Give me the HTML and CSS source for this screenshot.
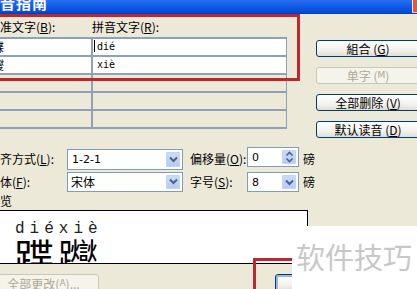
FILE: index.html
```html
<!DOCTYPE html>
<html lang="zh-CN">
<head>
<meta charset="utf-8">
<title>拼音指南</title>
<link rel="stylesheet" href="styles.css">
</head>
<body>
<div class="window">
  <div class="titlebar">
    <span class="title">拼音指南</span>
    <span class="close"></span>
  </div>
  <div class="body">
    <div class="left">
      <div class="heads">
        <span>标准文字(<u>B</u>):</span>
        <span>拼音文字(<u>R</u>):</span>
      </div>
      <div class="grid">
        <div class="cell white cjk">蹀</div>
        <div class="cell white mono"><span class="caret"></span>dié</div>
        <div class="cell white cjk">躞</div>
        <div class="cell white mono">xiè</div>
        <div class="cell"></div><div class="cell"></div>
        <div class="cell"></div><div class="cell"></div>
        <div class="cell"></div><div class="cell"></div>
      </div>
      <div class="form">
        <span class="lbl">对齐方式(<u>L</u>):</span>
        <div class="combo tall"><span class="val">1-2-1</span><span class="drop"><svg width="9" height="7" viewBox="0 0 9 7"><path d="M1 1.5 L4.5 5 L8 1.5" fill="none" stroke="#4d6185" stroke-width="2"/></svg></span></div>
        <span class="lbl lbl2">偏移量(<u>O</u>):</span>
        <div class="combo spin spin-top"><span class="val">0</span><span class="drop"><svg width="9" height="14" viewBox="0 0 9 14"><path d="M1.5 5.5 L4.5 2.5 L7.5 5.5 M1.5 8.5 L4.5 11.5 L7.5 8.5" fill="none" stroke="#4d6185" stroke-width="1.6"/></svg></span></div>
        <span class="unit">磅</span>

        <span class="lbl">字体(<u>F</u>):</span>
        <div class="combo"><span class="val cjkval">宋体</span><span class="drop"><svg width="9" height="7" viewBox="0 0 9 7"><path d="M1 1.5 L4.5 5 L8 1.5" fill="none" stroke="#4d6185" stroke-width="2"/></svg></span></div>
        <span class="lbl lbl2">字号(<u>S</u>):</span>
        <div class="combo spin"><span class="val">8</span><span class="drop"><svg width="9" height="7" viewBox="0 0 9 7"><path d="M1 1.5 L4.5 5 L8 1.5" fill="none" stroke="#4d6185" stroke-width="2"/></svg></span></div>
        <span class="unit">磅</span>
      </div>
      <div class="plabel">预览</div>
      <div class="preview">
        <div class="py">diéxiè</div>
        <div class="hz">蹀躞</div>
      </div>
      <div class="bottom">
        <span class="btn disabled wide">全部更改(<span class="sm">A</span>)...</span>
        <span class="btn default ok">确定</span>
      </div>
    </div>
    <div class="right">
      <span class="btn">組合 (<u>G</u>)</span>
      <span class="btn disabled">单字 (<span class="sm">M</span>)</span>
      <span class="btn">全部删除 (<u>V</u>)</span>
      <span class="btn">默认读音 (<u>D</u>)</span>
    </div>
  </div>
  <div class="mark mark-top"></div>
  <div class="mark mark-bottom"></div>
  <div class="watermark">软件技巧</div>
</div>
</body>
</html>
```

FILE: styles.css
```css
* { box-sizing: border-box; }
html, body { margin: 0; padding: 0; }
body { background: #ece9d8; }
.window {
  position: relative;
  width: 417px;
  height: 289px;
  overflow: hidden;
  background: #ece9d8;
  font-family: "Noto Sans CJK SC", "DejaVu Sans", sans-serif;
  font-size: 12px;
  color: #000;
}
u { text-decoration: underline; text-underline-offset: 1px; }
.titlebar {
  height: 14px;
  background: linear-gradient(#2a6ef0, #0a58e6 60%, #0548d2);
  border-bottom: 1px solid #0a3cb8;
  display: flex;
  justify-content: space-between;
  overflow: hidden;
}
.title {
  color: #fff;
  font-weight: bold;
  font-size: 15px;
  line-height: 15px;
  letter-spacing: 1px;
  margin-left: -16px;
  margin-top: -5px;
}
.close {
  width: 5px;
  height: 13px;
  background: #e2583a;
  border-left: 1px solid #f7e6e0;
  border-bottom: 1px solid #f0c0b0;
}
.body {
  display: grid;
  grid-template-columns: 328px 104px;
  margin-left: -12px;
}
.left { display: flex; flex-direction: column; }
.heads {
  display: grid;
  grid-template-columns: 104px 1fr;
  margin-top: 4px;
  height: 19px;
  line-height: 16px;
  padding-top: 1px;
}
.grid {
  width: 301px;
  margin-left: -2px;
  display: grid;
  grid-template-columns: 103px 193px;
  grid-auto-rows: 16px;
  gap: 2px;
  background: #8fa1b5;
  border: 2px solid #8fa1b5;
}
.cell { background: #ece9d8; line-height: 16px; }
.cell.white { background: #fff; }
.cjk { padding-left: 4px; }
.mono {
  font-family: "DejaVu Sans Mono", monospace;
  font-size: 10px;
  padding-left: 4px;
}
.caret {
  display: inline-block;
  width: 1px;
  height: 12px;
  background: #000;
  vertical-align: -2px;
  margin-left: -3px;
  margin-right: 2px;
}
.form {
  margin-top: 18px;
  display: grid;
  grid-template-columns: 79px 116px 64px 52px 16px;
  grid-template-rows: 23px 21px;
  row-gap: 1px;
  align-items: center;
}
.lbl { line-height: 14px; white-space: nowrap; }
.lbl2 { padding-left: 7px; }
.combo {
  height: 20px;
  border: 1px solid #7f9db9;
  background: #fff;
  display: flex;
  align-items: center;
  justify-content: space-between;
  padding: 1px;
}
.combo.tall { height: 21px; align-self: end; }
.val {
  font-family: "DejaVu Sans", sans-serif;
  font-size: 11px;
  padding-left: 3px;
}
.cjkval { font-family: "Noto Sans CJK SC", sans-serif; font-size: 12px; padding-left: 2px; }
.drop {
  width: 16px;
  height: 100%;
  background: linear-gradient(#cddcfb, #b4c9f6);
  border: 1px solid #fff;
  border-radius: 2px;
  box-shadow: 0 0 0 1px #c3d3fd inset;
  display: flex;
  align-items: center;
  justify-content: center;
}
.spin { align-self: end; }
.spin-top { align-self: start; }
.unit { padding-left: 4px; line-height: 14px; }
.plabel { margin-top: 1px; line-height: 16px; height: 16px; }
.preview {
  margin-top: 1px;
  width: 320px;
  height: 54px;
  background: #fff;
  border: 1px solid #000;
  overflow: hidden;
  padding: 11px 0 0 26px;
}
.py {
  font-family: "Liberation Mono", monospace;
  font-size: 16px;
  line-height: 14px;
  letter-spacing: 5px;
  color: #222;
}
.hz {
  font-family: "Noto Sans CJK SC", sans-serif;
  font-size: 40px;
  line-height: 40px;
  letter-spacing: 4px;
  margin-left: -1px;
}
.bottom {
  margin-top: 10px;
  display: flex;
}
.btn {
  flex-shrink: 0;
  height: 17px;
  border: 1px solid #003c74;
  border-radius: 3px;
  background: linear-gradient(#ffffff, #f3f2ec 60%, #e2ded2);
  display: flex;
  align-items: center;
  justify-content: center;
  line-height: 15px;
  white-space: nowrap;
}
.btn.disabled {
  border-color: #c9c7ba;
  background: #f5f4ea;
  color: #aca899;
}
.sm { font-size: 9px; font-family: "DejaVu Sans", sans-serif; }
.wide { width: 111px; height: 18px; }
.ok {
  margin-left: 176px;
  width: 75px;
  height: 18px;
  box-shadow: inset 0 0 0 2px #98b4e8;
}
.right {
  display: flex;
  flex-direction: column;
  gap: 10px;
  padding-top: 26px;
}
.mark {
  position: absolute;
  border: 3px solid #c2262c;
}
.mark-top {
  left: -10px;
  top: 14px;
  width: 310px;
  height: 67px;
}
.mark-bottom {
  left: 253px;
  top: 258px;
  width: 200px;
  height: 60px;
}
.watermark {
  position: absolute;
  left: 292px;
  top: 226px;
  right: 0;
  bottom: 0;
  background: #fff;
  color: #c8c8c8;
  font-family: "Noto Sans CJK SC", sans-serif;
  font-size: 29px;
  line-height: 29px;
  padding: 16px 0 0 4px;
  white-space: nowrap;
}
```
